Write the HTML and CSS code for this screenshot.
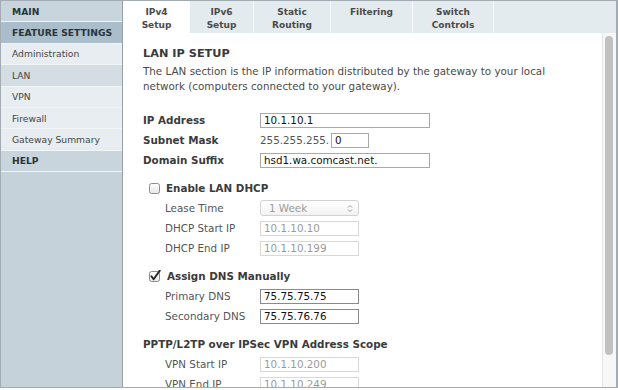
FILE: index.html
```html
<!DOCTYPE html>
<html>
<head>
<meta charset="utf-8">
<link rel="stylesheet" href="styles.css">
</head>
<body>
<div class="frame">
  <nav class="sidebar">
    <div class="nav-item nav-head">MAIN</div>
    <div class="nav-item nav-head nav-head-active">FEATURE SETTINGS</div>
    <div class="nav-item">Administration</div>
    <div class="nav-item nav-selected">LAN</div>
    <div class="nav-item">VPN</div>
    <div class="nav-item">Firewall</div>
    <div class="nav-item">Gateway Summary</div>
    <div class="nav-item nav-head">HELP</div>
  </nav>
  <main class="main">
    <div class="tabs">
      <div class="tab tab-active tab-ipv4">IPv4<br>Setup</div>
      <div class="tab tab-ipv6">IPv6<br>Setup</div>
      <div class="tab tab-static">Static<br>Routing</div>
      <div class="tab tab-filter">Filtering</div>
      <div class="tab tab-switch">Switch<br>Controls</div>
    </div>
    <div class="body">
      <div class="content">
        <h2 class="title">LAN IP SETUP</h2>
        <p class="intro">The LAN section is the IP information distributed by the gateway to your local network (computers connected to your gateway).</p>

        <div class="fields">
          <div class="row"><span class="label label-bold">IP Address</span><input class="field field-wide" type="text" value="10.1.10.1"></div>
          <div class="row"><span class="label label-bold">Subnet Mask</span><span class="mask-prefix">255.255.255.</span><input class="field field-tiny" type="text" value="0"></div>
          <div class="row"><span class="label label-bold">Domain Suffix</span><input class="field field-wide" type="text" value="hsd1.wa.comcast.net."></div>
        </div>

        <div class="group">
          <div class="row check-row">
            <svg class="checkbox" width="11" height="11" viewBox="0 0 11 11"><defs><linearGradient id="cbg" x1="0" y1="0" x2="0" y2="1"><stop offset="0" stop-color="#ffffff"/><stop offset="1" stop-color="#e6e6e6"/></linearGradient></defs><rect x="0.5" y="0.5" width="10" height="10" rx="2" fill="url(#cbg)" stroke="#8d8d8d"/></svg>
            <span class="label-bold">Enable LAN DHCP</span>
          </div>
          <div class="row sub"><span class="label sub-label">Lease Time</span>
            <div class="select"><span>1 Week</span><svg width="6" height="9" viewBox="0 0 6 9"><path d="M1 3.5 L3 1.5 L5 3.5 M1 5.5 L3 7.5 L5 5.5" fill="none" stroke="#999" stroke-width="1"/></svg></div>
          </div>
          <div class="row sub"><span class="label sub-label">DHCP Start IP</span><input class="field field-mid field-off" type="text" value="10.1.10.10" disabled></div>
          <div class="row sub"><span class="label sub-label">DHCP End IP</span><input class="field field-mid field-off" type="text" value="10.1.10.199" disabled></div>
        </div>

        <div class="group">
          <div class="row check-row">
            <svg class="checkbox" width="12" height="12" viewBox="0 0 12 12"><defs><linearGradient id="cbg2" x1="0" y1="0" x2="0" y2="1"><stop offset="0" stop-color="#ffffff"/><stop offset="1" stop-color="#e6e6e6"/></linearGradient></defs><rect x="0.5" y="1.5" width="10" height="10" rx="2" fill="url(#cbg2)" stroke="#8d8d8d"/><path d="M2.4 6.2 L4.6 9.2 L10.8 0.6" fill="none" stroke="#222" stroke-width="1.8" stroke-linecap="round" stroke-linejoin="round"/></svg>
            <span class="label-bold">Assign DNS Manually</span>
          </div>
          <div class="row sub"><span class="label sub-label">Primary DNS</span><input class="field field-mid field-dark" type="text" value="75.75.75.75"></div>
          <div class="row sub"><span class="label sub-label">Secondary DNS</span><input class="field field-mid field-dark" type="text" value="75.75.76.76"></div>
        </div>

        <div class="group">
          <div class="row"><span class="label-bold">PPTP/L2TP over IPSec VPN Address Scope</span></div>
          <div class="row sub"><span class="label sub-label">VPN Start IP</span><input class="field field-mid field-off" type="text" value="10.1.10.200" disabled></div>
          <div class="row sub"><span class="label sub-label">VPN End IP</span><input class="field field-mid field-off" type="text" value="10.1.10.249" disabled></div>
        </div>
      </div>
      <div class="scrollbar"><div class="thumb"></div></div>
    </div>
  </main>
</div>
</body>
</html>
```
FILE: styles.css
```css
* { box-sizing: border-box; }
html, body { margin: 0; padding: 0; background: #ffffff; }
body {
  width: 618px;
  height: 390px;
  overflow: hidden;
  font-family: "DejaVu Sans", Verdana, sans-serif;
}
.frame {
  display: flex;
  width: 618px;
  height: 388px;
  border: 1px solid #a3acb2;
  border-right-width: 2px;
}
.sidebar {
  width: 122px;
  flex: none;
  background: #c5d2d9;
  border-right: 1px solid #98a1a6;
}
.nav-item {
  height: 21.4px;
  border-bottom: 1px solid #f1f5f6;
  padding-left: 11px;
  display: flex;
  align-items: center;
  font-size: 9.2px;
  color: #454545;
  background: #e7edf0;
}
.nav-head {
  font-weight: bold;
  color: #29343a;
  background: #c9d5dc;
}
.nav-head-active { background: #a9bdca; }
.nav-selected { background: #d3dde3; }

.main {
  flex: 1;
  display: flex;
  flex-direction: column;
  min-width: 0;
}
.tabs {
  height: 32px;
  flex: none;
  display: flex;
  background: #e4ebee;
}
.tab {
  border-right: 1px solid #f7f9fa;
  font-size: 9px;
  font-weight: bold;
  color: #4a4a4a;
  line-height: 13px;
  text-align: center;
  padding-top: 5px;
}
.tab-active { background: #ffffff; border-right: none; }
.tab-ipv4 { width: 67px; }
.tab-ipv6 { width: 64px; }
.tab-static { width: 77px; }
.tab-filter { width: 82px; }
.tab-switch { width: 81px; }

.body {
  flex: 1;
  display: flex;
  min-height: 0;
}
.content {
  flex: 1;
  overflow: hidden;
  padding: 14px 0 0 20px;
  color: #444;
  font-size: 10.35px;
}
.title {
  margin: 0;
  font-size: 11.3px;
  line-height: 14px;
  font-weight: bold;
  color: #3a3a3a;
}
.intro {
  margin: 3px 0 0;
  line-height: 14.5px;
  color: #4a4a4a;
  width: 420px;
}
.fields { margin-top: 17px; }
.group { margin-top: 8px; }
.row {
  height: 20px;
  display: flex;
  align-items: center;
}
.label { width: 117px; flex: none; }
.label-bold { font-weight: bold; color: #3b3b3b; }
.sub { padding-left: 22px; }
.sub-label { width: 95px; color: #555; }
.check-row { padding-left: 6px; }
.checkbox { flex: none; margin-right: 6px; }

.mask-prefix { color: #555; margin-right: 2px; }
.field {
  height: 15px;
  border: 1px solid #a9a9a9;
  border-radius: 0;
  padding: 0 3px;
  margin: 0;
  font-family: "DejaVu Sans", Verdana, sans-serif;
  font-size: 10.35px;
  color: #111;
  background: #ffffff;
  outline: none;
}
.field-wide { width: 170px; }
.field-mid { width: 99px; }
.field-tiny { width: 38px; }
.field-off {
  border-color: #d8d8d8;
  color: #9a9a9a;
  background-color: #ffffff;
}
.field-dark { border-color: #8a8a8a; }

.select {
  width: 99px;
  height: 16px;
  border: 1px solid #d2d2d2;
  border-radius: 3px;
  background: linear-gradient(#ffffff, #f2f2f2);
  display: flex;
  align-items: center;
  justify-content: space-between;
  padding: 0 5px 0 8px;
  color: #999;
}

.scrollbar {
  width: 14px;
  flex: none;
  background: #f7f7f7;
  border-left: 1px solid #e6e6e6;
  padding: 3px 0 0 2px;
}
.thumb {
  width: 8px;
  height: 319px;
  border-radius: 4px;
  background: #c1c1c1;
}
```
